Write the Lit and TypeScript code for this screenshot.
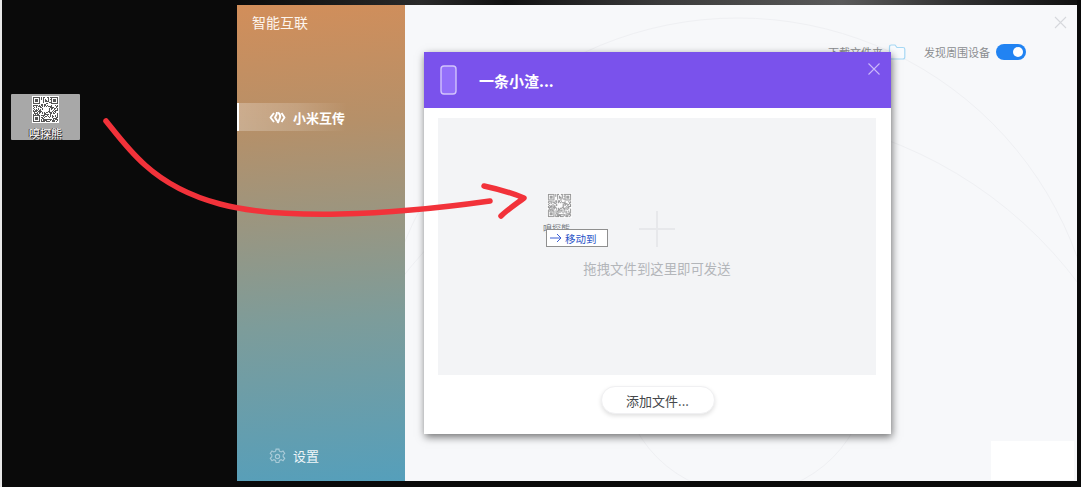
import { LitElement, html, css, svg } from "lit";
import { customElement } from "lit/decorators.js";

const N = 25;
function qrCells(): [number, number][] {
  const cells: [number, number][] = [];
  let seed = 12345;
  const finder = (x: number, y: number, ox: number, oy: number) => {
    const dx = x - ox, dy = y - oy;
    if (dx < 0 || dy < 0 || dx > 7 || dy > 7) return -1;
    if (dx === 7 || dy === 7) return 0;
    if (dx === 0 || dy === 0 || dx === 6 || dy === 6) return 1;
    if (dx === 1 || dy === 1 || dx === 5 || dy === 5) return 0;
    return 1;
  };
  for (let y = 0; y < N; y++) {
    for (let x = 0; x < N; x++) {
      seed = (seed * 1103515245 + 12345) & 0x7fffffff;
      let v = (seed >> 16) % 2;
      for (const [ox, oy] of [[0, 0], [18, 0], [0, 18]]) {
        const f = finder(x, y, ox, oy);
        if (f >= 0) v = f;
      }
      if (x >= 10 && x <= 14 && y >= 10 && y <= 14) v = 0;
      if (v) cells.push([x, y]);
    }
  }
  return cells;
}
const CELLS = qrCells();

function qr(cls: string) {
  return html`<svg class=${cls} viewBox="-1 -1 ${N + 2} ${N + 2}">
    <rect x="-1" y="-1" width=${N + 2} height=${N + 2} fill="#fff"></rect>
    ${CELLS.map(([x, y]) => svg`<rect x=${x} y=${y} width="1" height="1" fill="#555"></rect>`)}
  </svg>`;
}

@customElement("app-root")
export class AppRoot extends LitElement {
  static styles = css`
    :host {
      display: block;
      position: relative;
      width: 1081px;
      height: 487px;
      overflow: hidden;
      background: #0a0a0a;
      font-family: "Noto Sans CJK SC", "Noto Sans", sans-serif;
    }
    .edge { position: absolute; left: 0; top: 0; width: 2px; height: 487px; background: #e8e8e8; }
    .top-strip {
      position: absolute;
      left: 237px;
      top: 0;
      width: 840px;
      height: 5px;
      background: linear-gradient(90deg, #0a0a0a 0%, #2a2a2a 22%, #111 32%, #3a3a3a 50%, #5a5a5a 72%, #333 85%, #111 100%);
    }

    .desk-icon {
      position: absolute;
      left: 11px;
      top: 94px;
      width: 69px;
      height: 46px;
      background: #a8a8a8;
      border-radius: 1px;
      display: flex;
      flex-direction: column;
      align-items: center;
      padding-top: 2px;
      box-sizing: border-box;
    }
    .qr-desk { width: 27px; height: 27px; display: block; }
    .desk-label {
      font-size: 11px;
      line-height: 14px;
      margin-top: 3px;
      color: #fff;
      text-shadow: 1px 1px 0 #222, -1px 0 0 #433;
    }

    .window {
      position: absolute;
      left: 237px;
      top: 5px;
      width: 840px;
      height: 476px;
      display: flex;
      background: #f7f8fa;
    }
    .sidebar {
      width: 168px;
      flex: none;
      display: flex;
      flex-direction: column;
      color: #fff;
      background: linear-gradient(175deg, #d28e5a 0%, #b59069 26%, #7d9c9a 66%, #559fbb 100%);
    }
    .app-title {
      font-size: 14px;
      line-height: 20px;
      padding: 7px 0 0 15px;
      color: #fdf5ee;
    }
    .nav-item {
      margin-top: 71px;
      height: 28px;
      display: flex;
      align-items: center;
      gap: 7px;
      padding-left: 30px;
      border-left: 2px solid #fff;
      background: linear-gradient(90deg, rgba(255,255,255,.26), rgba(255,255,255,.16) 35%, rgba(255,255,255,0) 65%);
      font-size: 13px;
      font-weight: 700;
    }
    .nav-icon { width: 17px; height: 15px; flex: none; }
    .spacer { flex: 1; }
    .settings {
      display: flex;
      align-items: center;
      gap: 7px;
      padding: 0 0 16px 32px;
      font-size: 13px;
      line-height: 18px;
      color: #eef6f9;
    }
    .gear { width: 17px; height: 17px; flex: none; }

    .main { flex: 1; position: relative; overflow: hidden; }
    .rings { position: absolute; left: 0; top: 0; width: 672px; height: 476px; }
    .main-close {
      position: absolute;
      right: 10px;
      top: 11px;
      width: 13px;
      height: 13px;
    }
    .toolbar {
      position: relative;
      display: flex;
      justify-content: flex-end;
      align-items: center;
      height: 16px;
      margin-top: 39px;
      padding-right: 51px;
      font-size: 11px;
      color: #8b8d90;
    }
    .folder { width: 18px; height: 16px; margin: 0 18px 0 5px; }
    .toggle {
      width: 30px;
      height: 16px;
      margin-left: 6px;
      border-radius: 8px;
      background: #2183f2;
      display: flex;
      justify-content: flex-end;
      align-items: center;
      padding-right: 3px;
      box-sizing: border-box;
    }
    .knob { width: 10px; height: 10px; border-radius: 50%; background: #fff; }

    .modal {
      position: absolute;
      left: 19px;
      top: 47px;
      width: 467px;
      height: 382px;
      display: flex;
      flex-direction: column;
      background: #fff;
      box-shadow: 1px 3px 8px rgba(0,0,0,.55);
    }
    .modal-head {
      height: 56px;
      flex: none;
      display: flex;
      align-items: center;
      gap: 22px;
      padding-left: 16px;
      background: #7a52ec;
      color: #fff;
      font-size: 15px;
      font-weight: 700;
      position: relative;
    }
    .phone { width: 17px; height: 30px; flex: none; }
    .modal-close { position: absolute; right: 11px; top: 11px; width: 12px; height: 12px; }
    .drop {
      margin: 10px 15px 0 14px;
      height: 257px;
      background: #f3f4f6;
      display: flex;
      flex-direction: column;
      align-items: center;
    }
    .plus { width: 36px; height: 36px; margin-top: 93px; }
    .drop-text {
      margin-top: 11px;
      font-size: 13.4px;
      line-height: 20px;
      color: #b3b6ba;
    }
    .actions { flex: 1; display: flex; justify-content: center; padding-top: 11px; }
    .add-btn {
      width: 114px;
      height: 28px;
      box-sizing: border-box;
      border-radius: 14px;
      background: #fff;
      border: 1px solid #f0f0f2;
      box-shadow: 0 2px 4px rgba(0,0,0,.12);
      display: flex;
      align-items: center;
      justify-content: center;
      font-size: 13px;
      color: #45474a;
    }

    .white-block {
      position: absolute;
      left: 991px;
      top: 441px;
      width: 83px;
      height: 39px;
      background: #fff;
    }

    .ghost { position: absolute; left: 547px; top: 193px; width: 25px; height: 25px; opacity: .75; }
    .qr-ghost { width: 25px; height: 25px; display: block; }
    .ghost-label {
      position: absolute;
      left: 543px;
      top: 223px;
      font-size: 9px;
      line-height: 11px;
      color: #5a5f6a;
      opacity: .8;
    }
    .tip {
      position: absolute;
      left: 546px;
      top: 229px;
      width: 62px;
      height: 18px;
      box-sizing: border-box;
      background: #fff;
      border: 1px solid #8f8f8f;
      display: flex;
      align-items: center;
      gap: 3px;
      padding-left: 3px;
      font-size: 10.5px;
      color: #2b55c8;
    }
    .tip svg { width: 12px; height: 10px; flex: none; }

    .ink { position: absolute; left: 0; top: 0; width: 1081px; height: 487px; pointer-events: none; }
  `;

  render() {
    return html`
      <div class="edge"></div>
      <div class="top-strip"></div>
      <div class="desk-icon">
        ${qr("qr-desk")}
        <div class="desk-label">嗅探熊</div>
      </div>

      <div class="window">
        <aside class="sidebar">
          <div class="app-title">智能互联</div>
          <div class="nav-item">
            <svg class="nav-icon" viewBox="0 0 17 15" fill="none" stroke="#fff" stroke-width="1.9" stroke-linejoin="round">
              <path d="M5 3 L1.5 7.5 L5 12"></path>
              <path d="M8 2 C8 4 7 6 6 7.5 C7 9.5 8 11 10 12.5"></path>
              <path d="M9 2.5 C11 4 11.5 6 11 7.5 C10.5 9.5 9.5 11 8.5 13"></path>
              <path d="M12.5 3 L15.5 7.5 L12.5 12"></path>
            </svg>
            <span>小米互传</span>
          </div>
          <div class="spacer"></div>
          <div class="settings">
            <svg class="gear" viewBox="0 0 24 24" fill="none" stroke="#a9cbd8" stroke-width="1.6">
              <circle cx="12" cy="12" r="3"></circle>
              <path d="M10 1.5h4l.7 3 2.4 1.1 2.7-1.5 2.4 3.4-2.2 2.2v2.6l2.2 2.2-2.4 3.4-2.7-1.5-2.4 1.1-.7 3h-4l-.7-3-2.4-1.1-2.7 1.5-2.4-3.4 2.2-2.2V9.7L1.8 7.5l2.4-3.4 2.7 1.5 2.4-1.1z"></path>
            </svg>
            <span>设置</span>
          </div>
        </aside>

        <main class="main">
          <svg class="rings" viewBox="405 5 672 476" fill="none" stroke="#eff0f3" stroke-width="1">
            <circle cx="738" cy="378" r="360"></circle>
            <circle cx="738" cy="538" r="425"></circle>
            <circle cx="745" cy="370" r="124"></circle>
          </svg>
          <svg class="main-close" viewBox="0 0 13 13" stroke="#d6d8dc" stroke-width="1.1">
            <path d="M1 1L12 12M12 1L1 12"></path>
          </svg>
          <div class="toolbar">
            <span>下载文件夹</span>
            <svg class="folder" viewBox="0 0 18 16" fill="#f8fbfe" stroke="#a6d8f4" stroke-width="1.2">
              <path d="M1.5 3 C1.5 1.5 2 1 3.5 1 H7 L9 3.5 H15 C16.2 3.5 16.8 4 16.8 5.2 V13 C16.8 14.3 16.2 15 15 15 H3.5 C2 15 1.5 14.3 1.5 13 Z"></path>
            </svg>
            <span>发现周围设备</span>
            <div class="toggle"><div class="knob"></div></div>
          </div>

          <section class="modal">
            <header class="modal-head">
              <svg class="phone" viewBox="0 0 17 30">
                <rect x="1" y="1" width="15" height="28" rx="3" fill="#9470fa" stroke="#d2c4fb" stroke-width="1.4"></rect>
              </svg>
              <span>一条小渣...</span>
              <svg class="modal-close" viewBox="0 0 12 12" stroke="#cbb9fa" stroke-width="1.1">
                <path d="M.5 .5L11.5 11.5M11.5 .5L.5 11.5"></path>
              </svg>
            </header>
            <div class="drop">
              <svg class="plus" viewBox="0 0 36 36" stroke="#e7e8eb" stroke-width="2">
                <path d="M18 0V36M0 18H36"></path>
              </svg>
              <div class="drop-text">拖拽文件到这里即可发送</div>
            </div>
            <div class="actions">
              <div class="add-btn">添加文件...</div>
            </div>
          </section>
        </main>
      </div>

      <div class="white-block"></div>

      <div class="ghost">${qr("qr-ghost")}</div>
      <div class="ghost-label">嗅探熊</div>
      <div class="tip">
        <svg viewBox="0 0 12 10" fill="none" stroke="#3a5fd6" stroke-width="1">
          <path d="M0 5H11M7 1L11 5L7 9"></path>
        </svg>
        <span>移动到</span>
      </div>

      <svg class="ink" viewBox="0 0 1081 487" fill="none" stroke="#f2323a" stroke-width="5.5" stroke-linecap="round" stroke-linejoin="round">
        <path d="M106 121 C118 136 130 152 145 165 C165 183 190 196 220 204 C250 212 290 215 340 214 C390 213 440 208 490 201"></path>
        <path d="M484 186 C498 189 512 193 524 198 C516 204 507 210 501 216"></path>
      </svg>
    `;
  }
}
